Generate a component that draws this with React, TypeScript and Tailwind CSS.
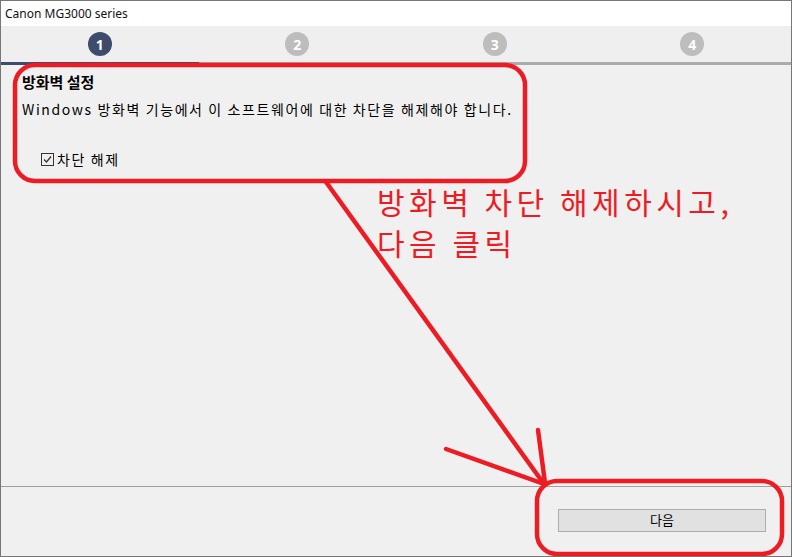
const RED = "#ed1c24"

const steps = [1, 2, 3, 4]

function StepCircle({ n, active }: { n: number; active: boolean }) {
  return (
    <div className="flex items-center justify-center">
      <div
        className={`flex h-[24px] w-[24px] items-center justify-center rounded-full text-[14px] font-bold text-white ${
          active ? "bg-[#3e4c6c]" : "bg-[#bdbdbd]"
        }`}
      >
        {n}
      </div>
    </div>
  )
}

function Annotations() {
  return (
    <svg className="pointer-events-none absolute left-0 top-0" width={792} height={557} viewBox="0 0 792 557" fill="none">
      {/* box around the setting */}
      <rect x={14} y={64} width={510} height={116} rx={20} stroke={RED} strokeWidth={4.5} />
      {/* box around the button */}
      <rect x={536} y={480} width={245} height={73} rx={20} stroke={RED} strokeWidth={4.5} />
      {/* arrow */}
      <g stroke={RED} strokeWidth={4.5} strokeLinecap="round">
        <line x1={325} y1={181} x2={543} y2={483} />
        <line x1={445} y1={448} x2={543} y2={483} />
        <line x1={537} y1={429} x2={544} y2={482} />
      </g>
    </svg>
  )
}

export default function App() {
  return (
    <div className="relative flex h-[557px] w-[792px] flex-col overflow-hidden border border-[#777777] bg-[#f0f0f0] font-['Noto_Sans','Noto_Sans_CJK_KR',sans-serif] text-black">
      {/* title bar */}
      <div className="flex h-[25px] items-center bg-white pl-[4px] text-[12px] text-[#111]">Canon MG3000 series</div>

      {/* steps */}
      <div className="grid h-[36px] grid-cols-4 bg-[#efefef]">
        {steps.map((n) => (
          <StepCircle key={n} n={n} active={n === 1} />
        ))}
      </div>
      <div className="flex h-[3px]">
        <div className="w-[198px] bg-[#3e4c6c]" />
        <div className="flex-1 bg-[#ababab]" />
      </div>

      {/* content */}
      <div className="flex flex-1 flex-col pl-[21px] pt-[7px] font-['Noto_Sans_CJK_KR',sans-serif]">
        <div className="h-[20px] text-[15px] font-bold leading-[20px]">방화벽 설정</div>
        <div className="mt-[7px] h-[20px] text-[14px] leading-[20px] tracking-[1.6px]">
          Windows 방화벽 기능에서 이 소프트웨어에 대한 차단을 해제해야 합니다.
        </div>
        <div className="ml-[19px] mt-[30px] flex h-[20px] items-center gap-[3px]">
          <div className="flex h-[13px] w-[13px] items-center justify-center border border-[#333] bg-[#f0f0f0]">
            <svg width={9} height={9} viewBox="0 0 9 9" fill="none">
              <path d="M1 4.5 L3.5 7 L8 1.5" stroke="#333" strokeWidth={1.3} />
            </svg>
          </div>
          <span className="text-[14px] leading-[20px] tracking-[1.6px]">차단 해제</span>
        </div>
      </div>

      {/* footer */}
      <div className="flex h-[70px] items-center justify-end border-t border-[#a0a0a0] pr-[25px]">
        <button className="mb-[3px] flex h-[23px] w-[208px] items-center justify-center border border-[#adadad] bg-[#e1e1e1] font-['Noto_Sans_CJK_KR',sans-serif] text-[13px]">
          다음
        </button>
      </div>

      <Annotations />

      <div className="absolute left-[376px] top-[180px] font-['Noto_Sans_CJK_KR',sans-serif] text-[30px] leading-[41px] tracking-[4.5px] text-[#ed1c24]">
        <div>방화벽 차단 해제하시고,</div>
        <div>다음 클릭</div>
      </div>
    </div>
  )
}
